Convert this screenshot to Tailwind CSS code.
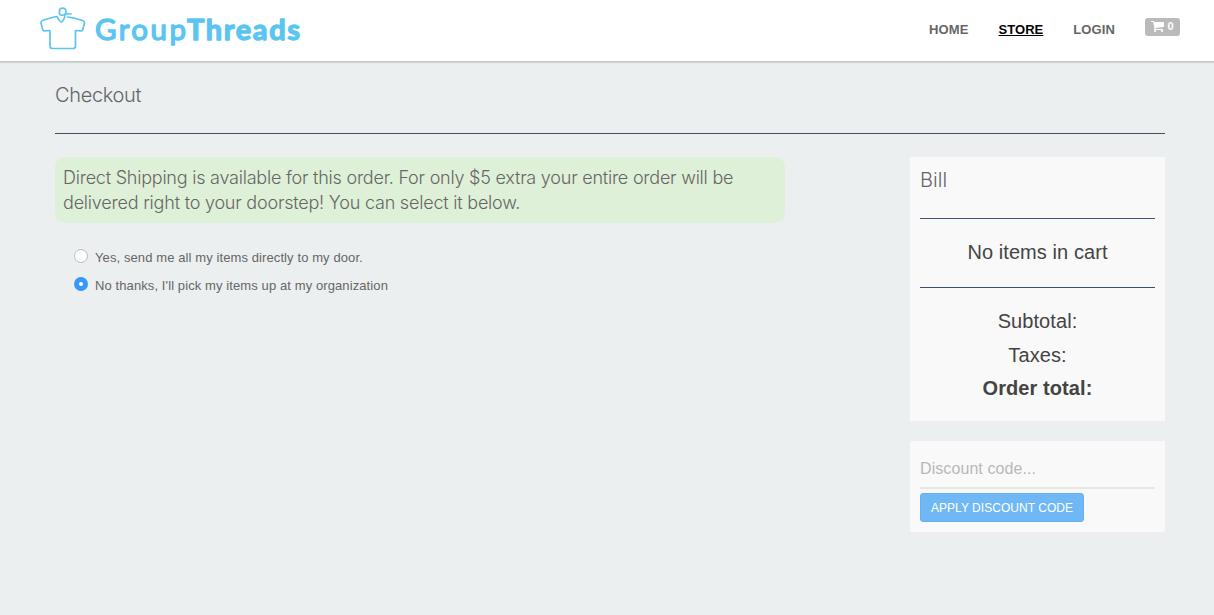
<!DOCTYPE html>
<html lang="en">
<head>
<meta charset="utf-8">
<title>GroupThreads - Checkout</title>
<script src="https://cdn.jsdelivr.net/npm/@tailwindcss/browser@4"></script>
</head>
<body class="min-h-screen overflow-hidden bg-[#ebeff0] font-['Liberation_Sans',Arial,sans-serif] text-[#666]">
<header class="flex h-[62px] items-start justify-between border-b border-[#c2c6c6] bg-white pr-[34px] pl-10 shadow-[0_1px_1px_#d3d7d7]">
  <svg class="h-[60px] w-[264px]" viewBox="0 0 264 60" role="img" aria-label="GroupThreads">
    <g fill="none" stroke="#5bc5f2" stroke-width="1.7" stroke-linecap="round" stroke-linejoin="round">
      <path d="M27.500 17 L33 17.800 L42.500 20.500 Q44.600 21.200 44.500 23 L42.800 29.500 Q42.500 31 41 30.900 L35.500 30.500 V46 Q35.500 48.500 33 48.500 H12.500 Q10 48.500 10 46 V30.500 L4.500 30.900 Q3 31 2.700 29.500 L1 23 Q.700 21 3 20.300 L14 17 L17 16.500 C18.500 20 20 21.800 21.300 21.800 C23.300 21.800 24.800 18 25 14.500 C25.300 13 26.200 12.500 26 11 C25.800 9.300 24.500 8.200 22.600 8.200 C20.400 8.200 18.900 9.500 19.500 11.200 M19.800 11.500 C18.500 13.500 20 15.400 22.300 15.200 C25 15 26.500 13 31 14"/>
    </g>
    <g fill="#5bc5f2" stroke="#5bc5f2" stroke-linejoin="round" font-family="Lato, sans-serif" font-size="29">
      <text x="55" y="40" font-weight="400" font-size="29.500" stroke-width="1.400" textLength="91" lengthAdjust="spacing">Group</text>
      <text x="147" y="40" font-weight="700" stroke-width="1.300" textLength="113" lengthAdjust="spacing">Threads</text>
    </g>
  </svg>
  <nav class="flex items-start gap-[30px] pt-[18px] text-[13px] leading-6 font-bold">
    <a class="tracking-[0.1px]">HOME</a>
    <a class="tracking-[0.05px] text-black underline">STORE</a>
    <a class="tracking-[0.1px]">LOGIN</a>
    <span class="flex h-[18px] w-[35px] items-center justify-center gap-[3px] rounded-[3px] bg-[#bababa] text-[11px] leading-none text-white">
      <svg class="-mt-0.5 h-[13px] w-[13px]" viewBox="0 128 1664 1664" fill="currentColor"><path d="M640 1536q0 52-38 90t-90 38-90-38-38-90 38-90 90-38 90 38 38 90zm896 0q0 52-38 90t-90 38-90-38-38-90 38-90 90-38 90 38 38 90zm128-1088v512q0 24-16 42.500t-41 21.500l-1044 122q13 60 13 70 0 16-24 64h920q26 0 45 19t19 45-19 45-45 19H448q-26 0-45-19t-19-45q0-11 8-31.500t16-36 21.500-40T445 1207L268 384H64q-26 0-45-19T0 320t19-45 45-19h256q16 0 28.500 6.500T368 278t13 24.500 8 26 5.500 29.500 4.500 26h1201q26 0 45 19t19 45z"/></svg>
      <span class="-mt-0.5">0</span>
    </span>
  </nav>
</header>
<main class="pt-px pr-[49px] pl-[55px]">
  <h1 class="h-[71px] border-b border-[#3c5064] pt-[18px] font-['Inter',sans-serif] text-[20px] leading-7 font-light tracking-[-0.35px]">Checkout</h1>
  <div class="flex items-start justify-between pt-[23px]">
    <section class="w-[730px]">
      <p class="h-[66px] rounded-[10px] bg-[#dff0d8] py-2 pl-2 font-['Inter',sans-serif] text-[18px] leading-[25px] font-light tracking-[-0.225px] whitespace-nowrap">Direct Shipping is available for this order. For only $5 extra your entire order will be<br><span class="tracking-[-0.21px]">delivered right to your doorstep! You can select it below.</span></p>
      <div class="flex flex-col pt-5 pl-[19px] text-[13px] leading-7 tracking-[0.1px]">
        <label class="flex gap-[7px]"><span class="mt-1.5 size-[14px] rounded-full border border-[#bbb] bg-white"></span><span class="pt-px leading-[27px]">Yes, send me all my items directly to my door.</span></label>
        <label class="flex gap-[7px]"><span class="mt-1.5 flex size-[14px] items-center justify-center rounded-full bg-[#3797fb]"><span class="size-1 rounded-full bg-white"></span></span><span class="pt-px leading-7">No thanks, I'll pick my items up at my organization</span></label>
      </div>
    </section>
    <aside class="flex w-[255px] flex-col gap-5">
      <section class="h-[264px] bg-[#f9f9f9] px-2.5 text-center text-[20px] tracking-[0.08px] text-[#444]">
        <h2 class="h-[62px] border-b border-[#3c5470] pt-[9px] text-left font-['Inter',sans-serif] leading-7 font-light text-[#666]">Bill</h2>
        <p class="h-[69px] border-b border-[#3c5064] leading-[67px]">No items in cart</p>
        <div class="pt-[17px] leading-[33.500px]">
          <p>Subtotal:</p>
          <p>Taxes:</p>
          <p class="font-bold">Order total:</p>
        </div>
      </section>
      <section class="h-[91px] bg-[#f9f9f9] px-2.5">
        <input class="block h-[48px] w-full border-b-2 border-[#e6e6e6] pt-[10px] text-[16px] tracking-[0.08px] placeholder:text-[#b8b8b8]" placeholder="Discount code...">
        <button class="mt-[4px] h-[29px] w-[164px] rounded-[3px] border border-[#65b0ef] bg-[#70b8f5] pt-px text-[12px] tracking-[0.04px] whitespace-nowrap text-white">APPLY DISCOUNT CODE</button>
      </section>
    </aside>
  </div>
</main>
</body>
</html>
